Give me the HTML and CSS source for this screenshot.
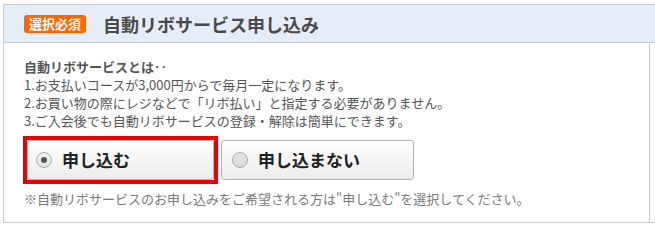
FILE: index.html
```html
<!DOCTYPE html>
<html lang="ja">
<head>
<meta charset="utf-8">
<title>自動リボサービス申し込み</title>
<link rel="stylesheet" href="styles.css">
</head>
<body>
<section class="panel">
  <header class="panel-head">
    <span class="badge">選択必須</span>
    <h2 class="title">自動リボサービス申し込み</h2>
  </header>
  <div class="panel-body">
    <p class="lead">自動リボサービスとは‥</p>
    <p class="line">1.お支払いコースが3,000円からで毎月一定になります。</p>
    <p class="line">2.お買い物の際にレジなどで「リボ払い」と指定する必要がありません。</p>
    <p class="line">3.ご入会後でも自動リボサービスの登録・解除は簡単にできます。</p>
    <div class="choices">
      <div class="selected-frame">
        <label class="choice choice-on">
          <span class="radio radio-on"></span>
          <span class="choice-text">申し込む</span>
        </label>
      </div>
      <label class="choice choice-off">
        <span class="radio"></span>
        <span class="choice-text">申し込まない</span>
      </label>
    </div>
    <p class="note">※自動リボサービスのお申し込みをご希望される方は"申し込む"を選択してください。</p>
  </div>
</section>
</body>
</html>
```

FILE: styles.css
```css
html, body {
  margin: 0;
  padding: 0;
  background: #fff;
  overflow: hidden;
}
body {
  font-family: "Noto Sans CJK JP", "Noto Sans", "Liberation Sans", sans-serif;
  color: #555;
}
.panel {
  margin: 4px 0 0 3px;
  border-top: 1px solid #cbcbcb;
  border-left: 1px solid #cbcbcb;
  border-bottom: 1px solid #cbcbcb;
}
.panel-head {
  height: 37px;
  background: #e5edf8;
  border-bottom: 1px solid #cbcbcb;
  display: flex;
  align-items: center;
  padding-left: 20px;
}
.badge {
  display: inline-block;
  height: 18px;
  line-height: 18px;
  padding: 0 5px;
  background: #ff6600;
  color: #fff;
  font-size: 13px;
  font-weight: bold;
  border-radius: 3px;
  margin-top: 1px;
}
.title {
  margin: 0 0 0 17px;
  font-size: 18px;
  line-height: 24px;
  font-weight: bold;
  color: #4a4a4a;
}
.panel-body {
  width: 605px;
  border-right: 1px solid #cbcbcb;
  padding: 15px 20px 14px 20px;
}
.lead, .line, .note {
  margin: 0;
  font-size: 13px;
  line-height: 18px;
  color: #555;
}
.lead {
  font-weight: bold;
}
.choices {
  display: flex;
  align-items: center;
  margin: 6px 0 0 -1px;
  gap: 3px;
}
.selected-frame {
  border: 4px solid #ee0000;
  display: flex;
}
.choice {
  box-sizing: border-box;
  height: 40px;
  display: flex;
  align-items: center;
  border: 1px solid #b4b4b4;
  border-radius: 3px;
  background: linear-gradient(#ffffff, #ececec);
  box-shadow: inset 0 1px 0 #fff;
}
.choice-on {
  width: 187px;
  padding-left: 8px;
}
.choice-off {
  width: 193px;
  padding-left: 10px;
}
.radio {
  box-sizing: border-box;
  width: 16px;
  height: 16px;
  border-radius: 50%;
  border: 1px solid #a9a9a9;
  background: linear-gradient(#e6e6e6, #d8d8d8);
  display: flex;
  align-items: center;
  justify-content: center;
  margin-right: 10px;
}
.radio-on {
  background: linear-gradient(#f4f4f4, #e2e2e2);
}
.radio-on::after {
  content: "";
  width: 6px;
  height: 6px;
  border-radius: 50%;
  background: #555;
}
.choice-text {
  font-size: 17px;
  font-weight: bold;
  color: #222;
  line-height: 20px;
}
.note {
  margin-top: 6px;
  color: #7a7a7a;
}
```
